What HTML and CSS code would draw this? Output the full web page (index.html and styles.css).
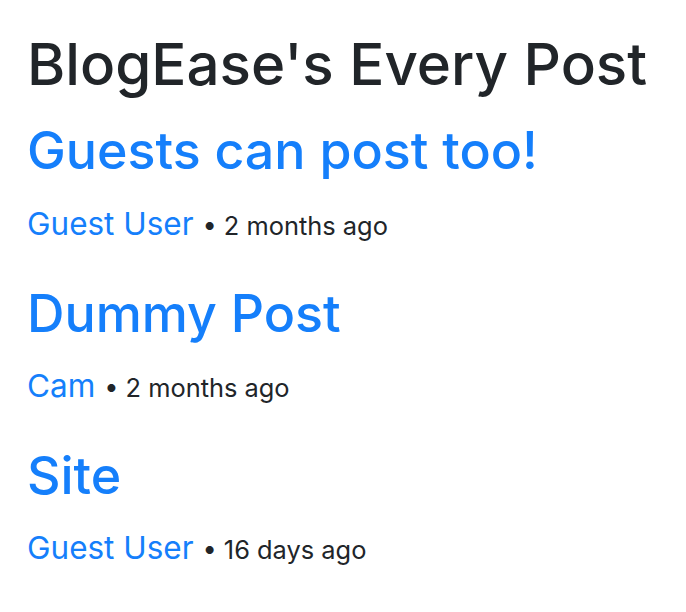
FILE: index.html
```html
<!DOCTYPE html>
<html>
<head>
<meta charset="utf-8">
<link rel="stylesheet" href="styles.css">
</head>
<body>
<div class="container">
  <h1 class="title">BlogEase's Every Post</h1>
  <div class="post">
    <h2 class="post-title"><a href="#">Guests can post too!</a></h2>
    <p class="meta"><a href="#" class="author">Guest User</a> <span class="when">• 2 months ago</span></p>
  </div>
  <div class="post">
    <h2 class="post-title"><a href="#">Dummy Post</a></h2>
    <p class="meta"><a href="#" class="author">Cam</a> <span class="when">• 2 months ago</span></p>
  </div>
  <div class="post">
    <h2 class="post-title"><a href="#">Site</a></h2>
    <p class="meta"><a href="#" class="author">Guest User</a> <span class="when">• 16 days ago</span></p>
  </div>
</div>
</body>
</html>
```
FILE: styles.css
```css
html, body { margin: 0; padding: 0; background: #fff; }
body {
  font-family: Inter, "Noto Sans", sans-serif;
  color: #212529;
}
a { color: #157ffb; text-decoration: none; }
.container { padding: 30px 24px 0 27px; }
.title {
  font-size: 58.3px;
  font-weight: 500;
  line-height: 1.2;
  margin: 0 0 20.5px 0;
  white-space: nowrap;
}
.post { margin-bottom: 40px; }
.post-title {
  font-size: 51.9px;
  font-weight: 500;
  line-height: 1.2;
  margin: 0 0 22px 0;
}
.meta { margin: 0; font-size: 31.5px; line-height: 1.2; font-weight: 400; }
.when { font-size: 25.4px; }
```
